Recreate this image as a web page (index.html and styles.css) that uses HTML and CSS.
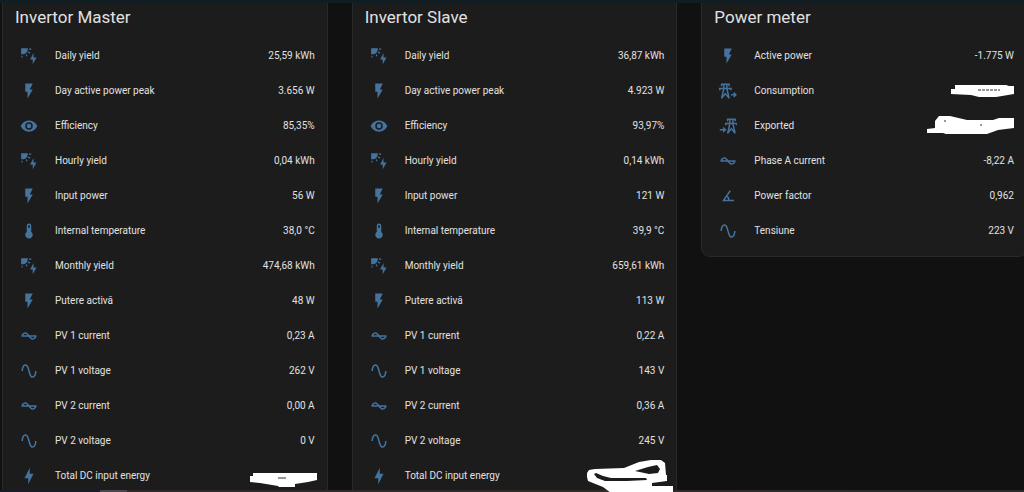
FILE: index.html
```html
<!DOCTYPE html>
<html lang="ro">
<head>
  <meta charset="UTF-8" />
  <meta name="viewport" content="width=device-width, initial-scale=1.0"/>
  <title>Invertor</title>
  <link rel="stylesheet" href="styles.css">
</head>
<body>

  <!-- Icons -->
  <svg class="sprite" aria-hidden="true">
    <symbol id="solar" viewBox="0 0 24 24"><path d="M1.500 1.500H10.500C10.500 4 9.900 6 8.500 7.500C7 9 5 9.800 3 9.800H1.500V1.500M12 2H15V3.500H12V2M11 6L14 7.200L13.200 8.800L10.500 7.500V6M7.500 10L9 9.500L10 12L8.500 12.500L7.500 10M2 11.500H3.500V14H2V11.500M18 8V14H22L17 23V16.500H13.500L18 8Z"/></symbol>
    <symbol id="flash" viewBox="0 0 24 24"><path d="M7 2V13H10V22L17 10H13L17 2H7Z"/></symbol>
    <symbol id="bolt" viewBox="0 0 24 24"><path d="M11 15H6L13 1V9H18L11 23V15Z"/></symbol>
    <symbol id="eye" viewBox="0 0 24 24"><path d="M12,9A3,3 0 0,0 9,12A3,3 0 0,0 12,15A3,3 0 0,0 15,12A3,3 0 0,0 12,9M12,17A5,5 0 0,1 7,12A5,5 0 0,1 12,7A5,5 0 0,1 17,12A5,5 0 0,1 12,17M12,4.500C7,4.500 2.730,7.610 1,12C2.730,16.390 7,19.500 12,19.500C17,19.500 21.270,16.390 23,12C21.270,7.610 17,4.500 12,4.500Z"/></symbol>
    <symbol id="thermometer" viewBox="0 0 24 24"><path d="M15 13V5A3 3 0 0 0 9 5V13A5 5 0 1 0 15 13M12 4A1 1 0 0 1 13 5V8H11V5A1 1 0 0 1 12 4Z"/></symbol>
    <symbol id="current" viewBox="0 0 24 24"><path d="M12.430 11C12.280 10.840 10 7 7 7S2.320 10.180 2 11V13H11.570C11.720 13.160 14 17 17 17S21.680 13.820 22 13V11H12.430M7 9C8.170 9 9.180 9.850 10 11H4.310C4.780 10.170 5.540 9 7 9M17 15C15.830 15 14.820 14.150 14 13H19.690C19.220 13.830 18.460 15 17 15Z"/></symbol>
    <symbol id="sine" viewBox="0 0 24 24"><path d="M16.500,21C13.500,21 12.310,16.760 11.050,12.280C10.140,9.040 9,5 7.500,5C4.110,5 4,11.930 4,12H2C2,11.630 2.060,3 7.500,3C10.500,3 11.710,7.250 12.970,11.740C13.830,14.800 15,19 16.500,19C19.940,19 20.030,12.070 20.030,12H22.030C22.030,12.370 21.970,21 16.500,21Z"/></symbol>
    <symbol id="angle" viewBox="0 0 24 24"><path d="M20,19H4.090L14.180,4.430L15.820,5.570L11.280,12.130C12.890,12.960 14,14.620 14,16.540C14,16.700 14,16.850 13.970,17H20V19M7.910,17H11.960C12,16.850 12,16.700 12,16.540C12,15.280 11.240,14.220 10.140,13.780L7.910,17Z"/></symbol>
    <symbol id="tower-out" viewBox="0 0 24 24"><path class="line" d="M3.500 5.500V3H13.500V5.500M1 11V8.500H16V11M6.500 3V8.500M10.500 3V8.500M6.500 8.500L3.500 22M10.500 8.500L13.500 22M4 21L8.500 15.500L13 21M16 17H22M19.500 14L22.500 17L19.500 20"/></symbol>
    <symbol id="tower-in" viewBox="0 0 24 24"><path class="line" d="M11.500 5.500V3H21.500V5.500M9 11V8.500H24V11M14.500 3V8.500M18.500 3V8.500M14.500 8.500L11.500 22M18.500 8.500L21.500 22M12 21L16.500 15.500L21 21M1 17H8M5.500 14L8.500 17L5.500 20"/></symbol>
  </svg>

  <div class="topbar"></div>

  <main class="cards">
    <section class="card">
      <h2>Invertor Master</h2>
      <dl>
        <div class="row"><svg class="icon"><use href="#solar"/></svg><dt>Daily yield</dt><dd>25,59 kWh</dd></div>
        <div class="row"><svg class="icon"><use href="#flash"/></svg><dt>Day active power peak</dt><dd>3.656 W</dd></div>
        <div class="row"><svg class="icon"><use href="#eye"/></svg><dt>Efficiency</dt><dd>85,35%</dd></div>
        <div class="row"><svg class="icon"><use href="#solar"/></svg><dt>Hourly yield</dt><dd>0,04 kWh</dd></div>
        <div class="row"><svg class="icon"><use href="#flash"/></svg><dt>Input power</dt><dd>56 W</dd></div>
        <div class="row"><svg class="icon"><use href="#thermometer"/></svg><dt>Internal temperature</dt><dd>38,0 °C</dd></div>
        <div class="row"><svg class="icon"><use href="#solar"/></svg><dt>Monthly yield</dt><dd>474,68 kWh</dd></div>
        <div class="row"><svg class="icon"><use href="#flash"/></svg><dt>Putere activă</dt><dd>48 W</dd></div>
        <div class="row"><svg class="icon"><use href="#current"/></svg><dt>PV 1 current</dt><dd>0,23 A</dd></div>
        <div class="row"><svg class="icon"><use href="#sine"/></svg><dt>PV 1 voltage</dt><dd>262 V</dd></div>
        <div class="row"><svg class="icon"><use href="#current"/></svg><dt>PV 2 current</dt><dd>0,00 A</dd></div>
        <div class="row"><svg class="icon"><use href="#sine"/></svg><dt>PV 2 voltage</dt><dd>0 V</dd></div>
        <div class="row">
          <svg class="icon"><use href="#bolt"/></svg><dt>Total DC input energy</dt>
          <dd><svg class="scribble" viewBox="0 0 100 40"><path d="M10 7H13V4H77V11L68 13L55 15V18H39L38 17L20 14L10 13Z"/><path class="gap" d="M38 9H46"/></svg></dd>
        </div>
      </dl>
    </section>

    <section class="card">
      <h2>Invertor Slave</h2>
      <dl>
        <div class="row"><svg class="icon"><use href="#solar"/></svg><dt>Daily yield</dt><dd>36,87 kWh</dd></div>
        <div class="row"><svg class="icon"><use href="#flash"/></svg><dt>Day active power peak</dt><dd>4.923 W</dd></div>
        <div class="row"><svg class="icon"><use href="#eye"/></svg><dt>Efficiency</dt><dd>93,97%</dd></div>
        <div class="row"><svg class="icon"><use href="#solar"/></svg><dt>Hourly yield</dt><dd>0,14 kWh</dd></div>
        <div class="row"><svg class="icon"><use href="#flash"/></svg><dt>Input power</dt><dd>121 W</dd></div>
        <div class="row"><svg class="icon"><use href="#thermometer"/></svg><dt>Internal temperature</dt><dd>39,9 °C</dd></div>
        <div class="row"><svg class="icon"><use href="#solar"/></svg><dt>Monthly yield</dt><dd>659,61 kWh</dd></div>
        <div class="row"><svg class="icon"><use href="#flash"/></svg><dt>Putere activă</dt><dd>113 W</dd></div>
        <div class="row"><svg class="icon"><use href="#current"/></svg><dt>PV 1 current</dt><dd>0,22 A</dd></div>
        <div class="row"><svg class="icon"><use href="#sine"/></svg><dt>PV 1 voltage</dt><dd>143 V</dd></div>
        <div class="row"><svg class="icon"><use href="#current"/></svg><dt>PV 2 current</dt><dd>0,36 A</dd></div>
        <div class="row"><svg class="icon"><use href="#sine"/></svg><dt>PV 2 voltage</dt><dd>245 V</dd></div>
        <div class="row">
          <svg class="icon"><use href="#bolt"/></svg><dt>Total DC input energy</dt>
          <dd><svg class="scribble" viewBox="0 0 100 40"><path fill-rule="evenodd" d="M-2 4L0 1L6 0L35 -1L50 -7L62 -9L72 -9L76 -6L77 6H78V12L63 14V17H84V24H22L14 18L-1 12L-2 8ZM5 5L8 9L16 12L38 12L58 11L57 9L36 9L22 9L14 7L7 4ZM46 2L59 -2L68 -4L71 0L69 4L60 5Z"/></svg></dd>
        </div>
      </dl>
    </section>

    <section class="card">
      <h2>Power meter</h2>
      <dl>
        <div class="row"><svg class="icon"><use href="#flash"/></svg><dt>Active power</dt><dd>-1.775 W</dd></div>
        <div class="row">
          <svg class="icon"><use href="#tower-out"/></svg><dt>Consumption</dt>
          <dd><svg class="scribble" viewBox="0 0 100 40"><path d="M12 5H16V1H67L70 2H75V10L63 12L57 13H40L32 11L12 10Z"/><path class="gap" d="M39 6H61" stroke-dasharray="3 1"/></svg></dd>
        </div>
        <div class="row">
          <svg class="icon"><use href="#tower-in"/></svg><dt>Exported</dt>
          <dd><svg class="scribble" viewBox="0 0 100 40"><path d="M-12 10L-4 9V2L0 -3H11L28 1H54L60 -1H75V9L59 11L48 15H7L4 14H-12Z"/><path class="gap" d="M5 2H7M41 6H43"/></svg></dd>
        </div>
        <div class="row"><svg class="icon"><use href="#current"/></svg><dt>Phase A current</dt><dd>-8,22 A</dd></div>
        <div class="row"><svg class="icon"><use href="#angle"/></svg><dt>Power factor</dt><dd>0,962</dd></div>
        <div class="row"><svg class="icon"><use href="#sine"/></svg><dt>Tensiune</dt><dd>223 V</dd></div>
      </dl>
    </section>
  </main>

  <div class="bottombar"></div>

</body>
</html>
```
FILE: styles.css
```css
:root {
  --bg: #111111;
  --card: #1c1c1c;
  --border: #292929;
  --text: #e1e1e1;
  --icon: #44739e;
}

* {
  margin: 0;
  padding: 0;
  box-sizing: border-box;
}

body {
  background: var(--bg);
  color: var(--text);
  font-family: Roboto, sans-serif;
  font-size: 10px;
  height: 100vh;
  overflow: hidden;
}

.sprite {
  display: none;
}

.topbar, .bottombar {
  position: fixed;
  left: 0;
  right: 0;
  height: 3px;
  z-index: 1;
}

.topbar {
  top: 0;
  background: #101e24;
}

.bottombar {
  bottom: 0;
  height: 2px;
  background: linear-gradient(90deg, #1b1c29 100px, #4b474d 100px, #4b474d 127px, #30282b 127px, #302b29 60%, #292a2c);
  z-index: 0;
}

.cards {
  display: grid;
  grid-template-columns: repeat(3, 1fr);
  gap: 24px;
  align-items: start;
  margin: 0 -3px 0 2px;
}

.card {
  background: var(--card);
  border: 1px solid var(--border);
  border-top: none;
  border-radius: 0 0 9px 9px;
  padding: 0 12px 8px;
}

h2 {
  font-size: 17px;
  font-weight: 400;
  line-height: 34px;
  padding-bottom: 4px;
}

.row {
  display: flex;
  align-items: center;
  height: 35px;
  padding-left: 5px;
}

.icon {
  width: 18px;
  height: 18px;
  margin-right: 17px;
  fill: var(--icon);
}

.line {
  fill: none;
  stroke: var(--icon);
  stroke-width: 2;
}

dt {
  flex: 1;
}

dd {
  position: relative;
  white-space: nowrap;
}

/* pen marks over the hidden values */
.scribble {
  position: absolute;
  right: -25px;
  top: -7px;
  width: 100px;
  height: 40px;
  fill: #fff;
  overflow: visible;
  z-index: 2;
}

.gap {
  stroke: #333;
}
```
